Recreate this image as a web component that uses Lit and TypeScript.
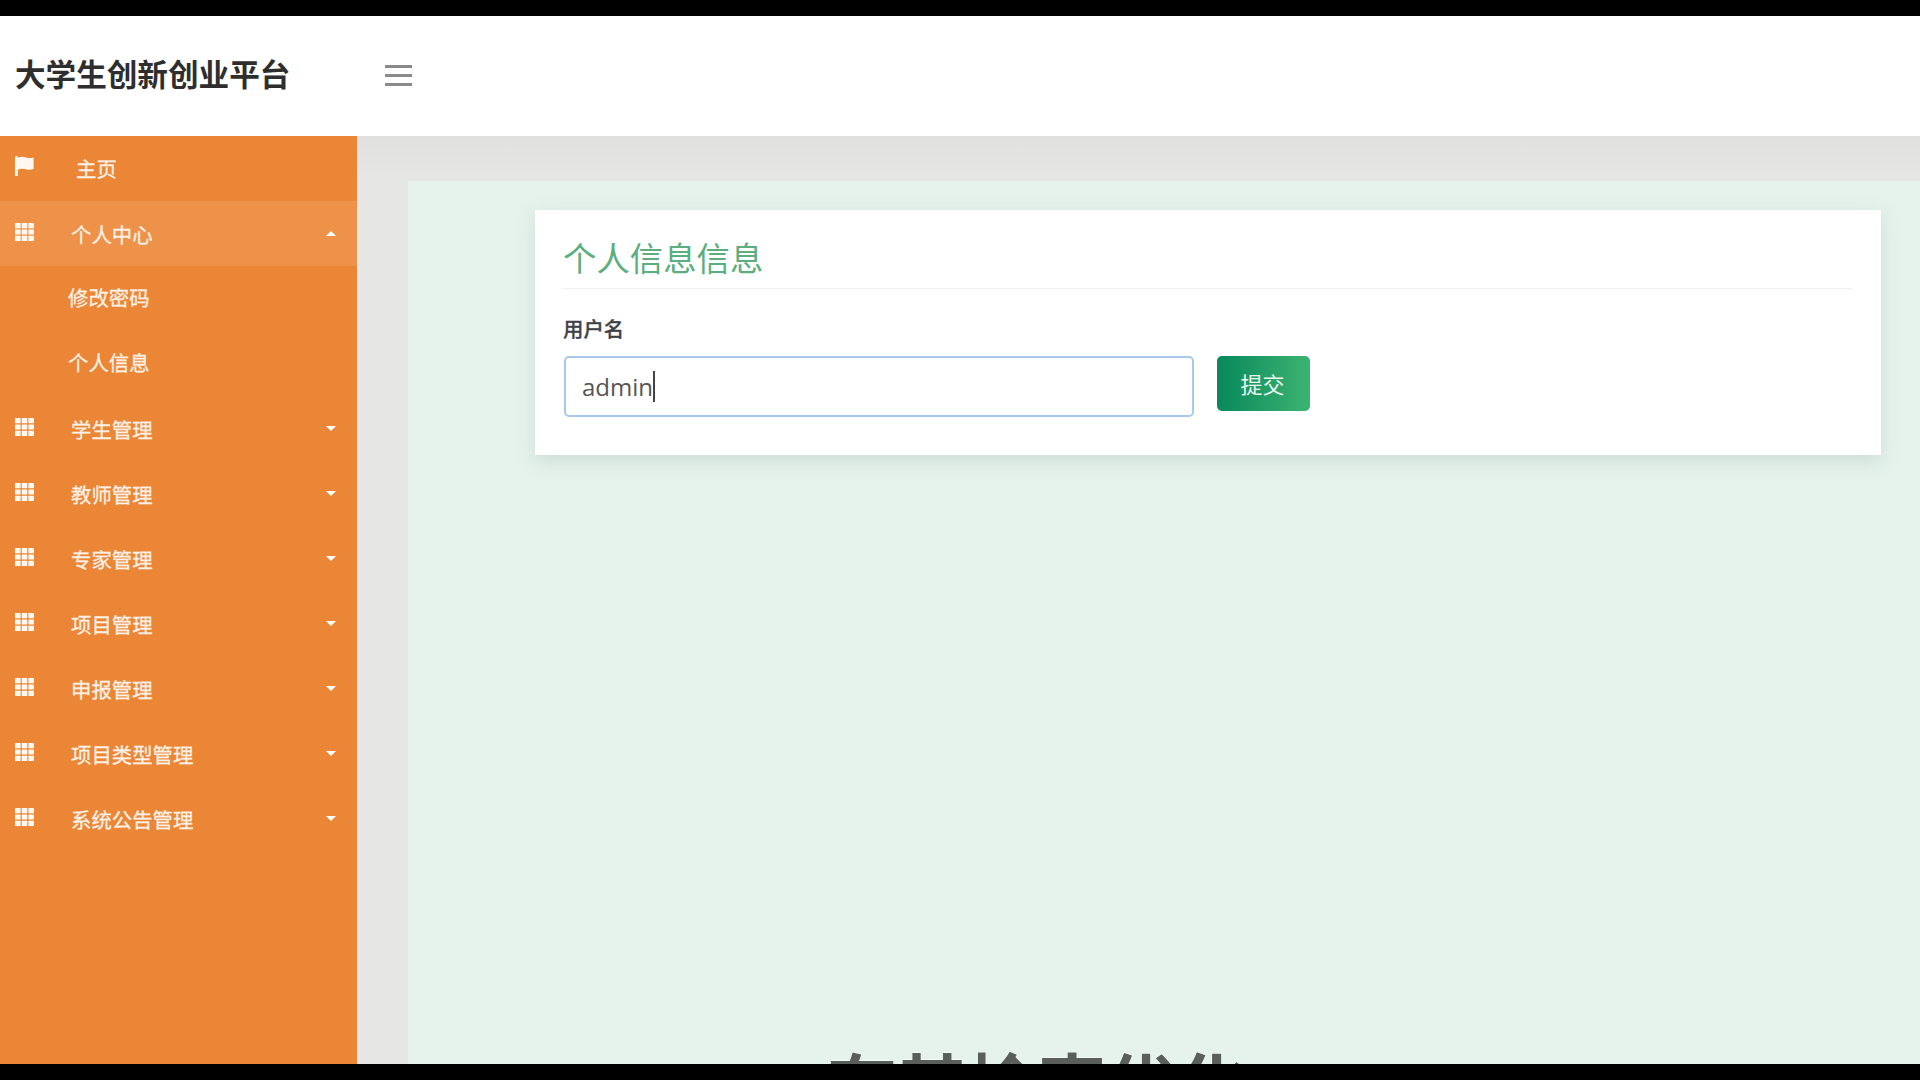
import { LitElement, html, css, svg } from "lit";
import { customElement } from "lit/decorators.js";

const gridIcon = html`<svg class="ico" viewBox="0 0 19 18" width="19" height="18" aria-hidden="true">
  ${[0, 6.7, 13.4].map((x) => [0, 6.4, 12.8].map((y) => svg`<rect x=${x} y=${y} width="5.6" height="5.2" rx=".5" fill="#fff8f0"/>`))}
</svg>`;

const flagIcon = html`<svg class="ico flag" viewBox="0 0 19 20" width="19" height="20" aria-hidden="true">
  <path fill="#fff8f0" d="M0 1.500C0 .6.7 0 1.500 0S3 .6 3 1.500V20H0z"/>
  <path fill="#fff8f0" d="M3 1.800C6 .4 8.500.6 11 1.400c2.500.8 5 .8 7.600.1v11.500c-2.700 1-5.200 1-7.700.2-2.600-.8-5.200-.8-7.900.3z"/>
</svg>`;

const groups = ["学生管理", "教师管理", "专家管理", "项目管理", "申报管理", "项目类型管理", "系统公告管理"];

@customElement("app-root")
export class AppRoot extends LitElement {
  static styles = css`
    :host { display: block; width: 1920px; height: 1080px; position: relative; overflow: hidden; background: #000; font-family: "Liberation Sans", "Noto Sans CJK SC", sans-serif; }
    .screen { height: 1048px; margin-top: 16px; display: flex; flex-direction: column; overflow: hidden; background: #fff; }
    .header { height: 120px; flex: none; display: flex; align-items: center; background: #fff; }
    .brand { width: 357px; flex: none; padding-left: 15px; padding-bottom: 6px; box-sizing: border-box; font-size: 30.6px; font-weight: 700; color: #2e2e2e; white-space: nowrap; }
    .burger { margin-left: 28px; margin-bottom: 2px; width: 27px; display: flex; flex-direction: column; gap: 6px; }
    .burger i { display: block; height: 3px; background: #8a8a8a; }
    .body { flex: 1; display: flex; min-height: 0; }
    .side { width: 357px; flex: none; background: #ea8636; color: #fff; }
    .row { height: 65px; display: flex; align-items: center; position: relative; font-size: 20.4px; color: #fdf0e4; -webkit-text-stroke: .3px #fdf0e4; }
    .row.open { background: #ee9249; }
    .row .ico { margin-left: 15px; flex: none; position: relative; top: -2px; }
    .row .ico.flag { top: -3px; }
    .row .label { margin-left: 37px; white-space: nowrap; }
    .row.home .label { margin-left: 42px; margin-top: -2px; }
    .row.sub .label { margin-left: 68px; margin-top: -4px; }
    .caret { position: absolute; left: 326px; top: 30px; width: 0; height: 0; border-left: 5.5px solid transparent; border-right: 5.5px solid transparent; border-top: 5px solid #fff; }
    .caret.up { border-top: 0; border-bottom: 5px solid #fff; }
    .main { flex: 1; min-width: 0; background: linear-gradient(#e0e0de, #e6e6e4 40px); padding: 45px 0 0 51px; display: flex; }
    .page { flex: 1; background: #e6f3ed; padding: 29px 39px 0 127px; position: relative; overflow: hidden; }
    .card { background: #fefffe; height: 245px; box-sizing: border-box; padding: 25px 29px 0 28px; box-shadow: 0 6px 18px rgba(120, 140, 135, .22); }
    .title { font-size: 33.4px; line-height: 50px; color: #5cae7f; padding-bottom: 4px; border-bottom: 1px solid #eef0ee; height: 49px; white-space: nowrap; }
    .field { margin-top: 27px; }
    .flabel { font-size: 20.4px; line-height: 28px; font-weight: 500; color: #3f4247; -webkit-text-stroke: .3px #3f4247; }
    .inline { display: flex; align-items: flex-start; margin-top: 12px; gap: 23px; }
    .input { width: 630px; height: 61px; box-sizing: border-box; margin-left: 1px; border: 2px solid #a9c8ee; border-radius: 5px; padding-left: 16px; display: flex; align-items: center; font-family: "Open Sans", sans-serif; font-size: 24px; color: #555; background: #fff; }
    .cursor { width: 2px; height: 31px; background: #444; margin-left: 0; }
    .btn { width: 93px; height: 55px; border-radius: 5px; background: linear-gradient(90deg, #08895c, #3cb371); color: #eef8f2; font-size: 22px; display: flex; align-items: center; justify-content: center; padding: 0 2px 2px 0; box-sizing: border-box; }
    .caption { position: absolute; left: 419px; bottom: -60px; font-size: 70px; line-height: 70px; font-weight: 700; white-space: nowrap; color: #5a5f5c; -webkit-text-stroke: 1px #fff; paint-order: stroke fill; }
  `;

  render() {
    return html`
      <div class="screen">
        <header class="header">
          <div class="brand">大学生创新创业平台</div>
          <div class="burger"><i></i><i></i><i></i></div>
        </header>
        <div class="body">
          <nav class="side">
            <div class="row home">${flagIcon}<span class="label">主页</span></div>
            <div class="row open">${gridIcon}<span class="label">个人中心</span><span class="caret up"></span></div>
            <div class="row sub"><span class="label">修改密码</span></div>
            <div class="row sub"><span class="label">个人信息</span></div>
            ${groups.map((g) => html`<div class="row">${gridIcon}<span class="label">${g}</span><span class="caret"></span></div>`)}
          </nav>
          <main class="main">
            <div class="page">
              <section class="card">
                <div class="title">个人信息信息</div>
                <div class="field">
                  <div class="flabel">用户名</div>
                  <div class="inline">
                    <div class="input">admin<span class="cursor"></span></div>
                    <div class="btn">提交</div>
                  </div>
                </div>
              </section>
              <div class="caption">有其检索优化</div>
            </div>
          </main>
        </div>
      </div>
    `;
  }
}
